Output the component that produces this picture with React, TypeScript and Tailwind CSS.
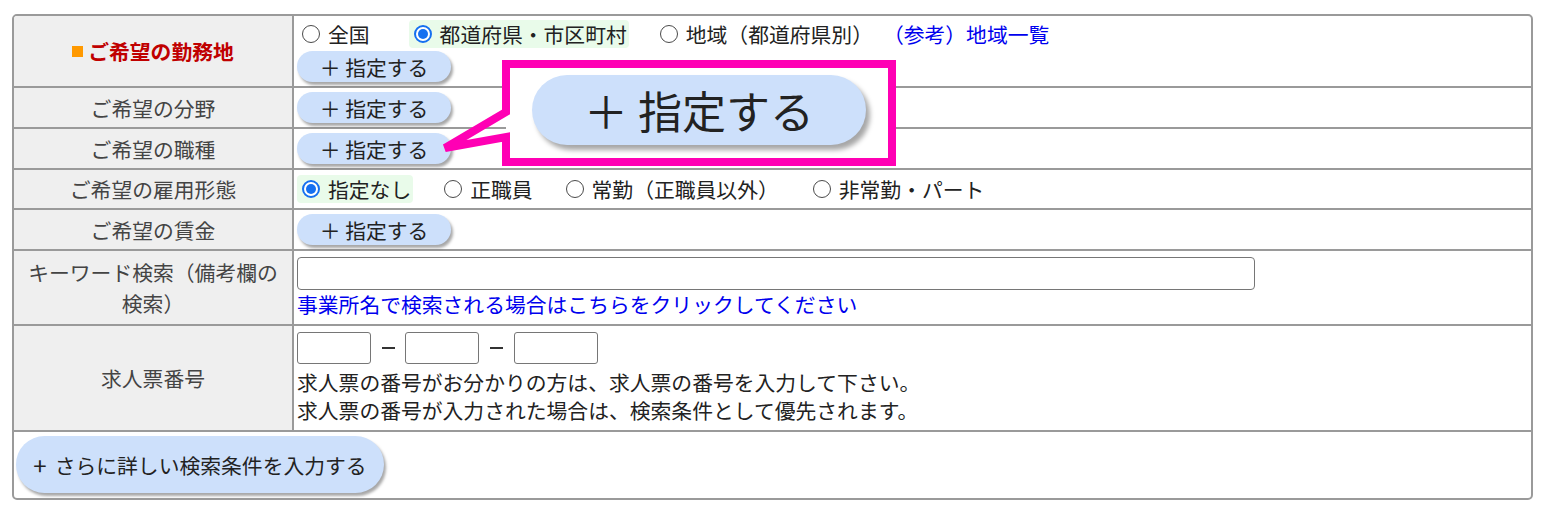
import React from "react";

function Radio({ checked }: { checked?: boolean }) {
  if (checked) {
    return (
      <span className="w-[18px] h-[18px] shrink-0 rounded-full border-[2px] border-[#1670f0] bg-white flex items-center justify-center">
        <span className="w-[10px] h-[10px] rounded-full bg-[#1670f0]" />
      </span>
    );
  }
  return <span className="w-[18px] h-[18px] shrink-0 rounded-full border-[1.5px] border-[#4a4a4a] bg-white" />;
}

function Opt({ label, checked, className = "" }: { label: string; checked?: boolean; className?: string }) {
  return (
    <div
      className={`flex items-center h-[28px] pl-[5px] pr-[2px] gap-[8px] rounded-[4px] whitespace-nowrap ${
        checked ? "bg-[#e9fbea]" : ""
      } ${className}`}
    >
      <Radio checked={checked} />
      <span>{label}</span>
    </div>
  );
}

function SmallBtn() {
  return (
    <div className="w-[154px] h-[31px] rounded-full bg-[#cde0fb] shadow-[2px_3px_3px_rgba(0,0,0,0.35)] flex items-center justify-center text-[#222] whitespace-nowrap">
      ＋ 指定する
    </div>
  );
}

function Row({
  hc,
  label,
  children,
  cc = "",
}: {
  hc: string;
  label: React.ReactNode;
  children: React.ReactNode;
  cc?: string;
}) {
  return (
    <div className={`flex ${hc} border-b-2 border-[#9a9a9a]`}>
      <div className="w-[280px] shrink-0 bg-[#efefef] border-r-2 border-[#9a9a9a] flex items-center justify-center text-center text-[#444]">
        {label}
      </div>
      <div className={`flex-1 pl-[3px] ${cc}`}>{children}</div>
    </div>
  );
}

export default function App() {
  return (
    <div className="relative w-[1544px] h-[514px] bg-white pl-[12px] pt-[14px] font-['Noto_Sans_CJK_JP','Noto_Sans',sans-serif] text-[20.8px] leading-[28px] text-[#222]">
      <div className="w-[1521px] border-2 border-[#9a9a9a] rounded-[5px] overflow-hidden">
        <Row
          hc="h-[72px]"
          label={
            <span className="flex items-center">
              <span className="w-[11px] h-[11px] bg-[#ff9900] mr-[5px]" />
              <span className="font-bold text-[#c00000]">ご希望の勤務地</span>
            </span>
          }
          cc="flex flex-col pt-[4px]"
        >
          <div className="flex items-center h-[28px]">
            <Opt label="全国" />
            <Opt label="都道府県・市区町村" checked className="ml-[37px]" />
            <Opt label="地域（都道府県別）" className="ml-[26px]" />
            <a className="ml-[8px] text-[#0000ee] whitespace-nowrap">（参考）地域一覧</a>
          </div>
          <div className="mt-[3px]">
            <SmallBtn />
          </div>
        </Row>
        <Row hc="h-[41px]" label="ご希望の分野" cc="flex items-center">
          <SmallBtn />
        </Row>
        <Row hc="h-[41px]" label="ご希望の職種" cc="flex items-center">
          <SmallBtn />
        </Row>
        <Row hc="h-[40px]" label="ご希望の雇用形態" cc="flex items-center">
          <Opt label="指定なし" checked />
          <Opt label="正職員" className="ml-[26px]" />
          <Opt label="常勤（正職員以外）" className="ml-[26px]" />
          <Opt label="非常勤・パート" className="ml-[27px]" />
        </Row>
        <Row hc="h-[41px]" label="ご希望の賃金" cc="flex items-center">
          <SmallBtn />
        </Row>
        <Row
          hc="h-[75px]"
          label={
            <span className="leading-[31px]">
              キーワード検索（備考欄の
              <br />
              検索）
            </span>
          }
          cc="flex flex-col pt-[6px]"
        >
          <div className="w-[958px] h-[33px] border border-[#767676] rounded-[4px] bg-white" />
          <a className="text-[#0000ee]">事業所名で検索される場合はこちらをクリックしてください</a>
        </Row>
        <Row hc="h-[106px]" label="求人票番号" cc="flex flex-col pt-[6px]">
          <div className="flex items-center h-[32px]">
            <div className="w-[74px] h-[32px] border border-[#767676] rounded-[3px] bg-white" />
            <span className="ml-[11px] mr-[10px] w-[13px] h-[2px] bg-[#333]" />
            <div className="w-[74px] h-[32px] border border-[#767676] rounded-[3px] bg-white" />
            <span className="ml-[11px] mr-[11px] w-[13px] h-[2px] bg-[#333]" />
            <div className="w-[84px] h-[32px] border border-[#767676] rounded-[3px] bg-white" />
          </div>
          <p className="mt-[4px]">求人票の番号がお分かりの方は、求人票の番号を入力して下さい。</p>
          <p>求人票の番号が入力された場合は、検索条件として優先されます。</p>
        </Row>
        <div className="h-[66px] pl-[2px] pt-[4px]">
          <div className="w-[368px] h-[57px] rounded-full bg-[#cde0fb] shadow-[2px_3px_3px_rgba(0,0,0,0.35)] flex items-center justify-center text-[#222] whitespace-nowrap">
            <span className="text-[24px] mr-[8px]">+</span>さらに詳しい検索条件を入力する
          </div>
        </div>
      </div>

      <svg
        className="absolute left-0 top-0 pointer-events-none"
        width="1544"
        height="514"
        viewBox="0 0 1544 514"
      >
        <rect x="506" y="64" width="386" height="98" fill="#ffffff" />
        <path
          d="M506 112 V64 H892 V162 H506 V137 L445 148 Z"
          fill="none"
          stroke="#ff00b4"
          strokeWidth="8"
          strokeLinejoin="miter"
        />
      </svg>
      <div className="absolute left-[532px] top-[75px] w-[334px] h-[70px] rounded-full bg-[#cde0fb] shadow-[4px_5px_5px_rgba(0,0,0,0.35)] flex items-center justify-center text-[44px] leading-none text-[#222] whitespace-nowrap">
        ＋ 指定する
      </div>
    </div>
  );
}
